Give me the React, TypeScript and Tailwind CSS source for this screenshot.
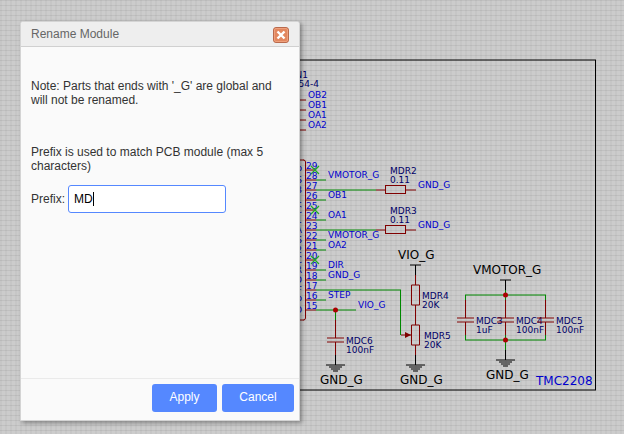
import { useState } from "react";

const GREEN = "#008800";
const MAROON = "#800000";
const BLUE = "#0000cc";
const NAVY = "#000066";

type LabelProps = {
  x: number;
  y: number;
  text: string;
  color?: string;
  size?: number;
  end?: boolean;
};

function Label({ x, y, text, color = BLUE, size = 9, end = false }: LabelProps) {
  return (
    <text x={x} y={y} fill={color} fontSize={size} textAnchor={end ? "end" : "start"}>
      {text}
    </text>
  );
}

type WireProps = { h?: string; v?: string; color?: string };

// Horizontal runs straddle two pixel rows and are drawn soft; vertical runs are crisp.
function Wire({ h, v, color = GREEN }: WireProps) {
  return (
    <g stroke={color} fill="none">
      {h && <path d={h} strokeWidth={2} strokeOpacity={0.5} />}
      {v && <path d={v} />}
    </g>
  );
}

function Ground({ x, y }: { x: number; y: number }) {
  return (
    <Wire
      color="#000"
      h={`M${x - 9.5} ${y}h19M${x - 6.5} ${y + 2}h13M${x - 4.5} ${y + 4}h9M${x - 2.5} ${y + 6}h5`}
    />
  );
}

function Box({ x, y, w, h }: { x: number; y: number; w: number; h: number }) {
  return (
    <Wire
      color={MAROON}
      h={`M${x} ${y}h${w}M${x} ${y + h}h${w}`}
      v={`M${x} ${y}v${h}M${x + w} ${y}v${h}`}
    />
  );
}

function Resistor({ y, name }: { y: number; name: string }) {
  return (
    <g>
      <Wire h={`M316 ${y}H376`} />
      <Wire color={MAROON} h={`M376 ${y}H385M406 ${y}H416`} />
      <rect x={385.5} y={y - 4.5} width={20} height={8} stroke={MAROON} fill="none" />
      <Label x={390} y={y - 16} text={name} color={NAVY} />
      <Label x={390} y={y - 7} text="0.11" color={NAVY} />
      <Label x={418} y={y - 2} text="GND_G" />
    </g>
  );
}

function Capacitor({ x, y, name, value }: { x: number; y: number; name: string; value: string }) {
  return (
    <g>
      <Wire
        color={MAROON}
        h={`M${x - 8.5} ${y - 2}h17M${x - 8.5} ${y + 2}h17`}
        v={`M${x} ${y - 20}V${y - 2}M${x} ${y + 2}V${y + 15}`}
      />
      <Label x={x + 10.5} y={y + 4} text={name} color={NAVY} />
      <Label x={x + 10.5} y={y + 13} text={value} color={NAVY} />
    </g>
  );
}

const pins = [
  { n: 29, name: "EP", nc: true },
  { n: 28, name: "VS", net: "VMOTOR_G" },
  { n: 27, name: "BRB" },
  { n: 26, name: "OB1", net: "OB1" },
  { n: 25, name: "NC", nc: true },
  { n: 24, name: "OA1", net: "OA1" },
  { n: 23, name: "BRA" },
  { n: 22, name: "VS", net: "VMOTOR_G" },
  { n: 21, name: "OA2", net: "OA2" },
  { n: 20, name: "NC", nc: true },
  { n: 19, name: "DIR", net: "DIR" },
  { n: 18, name: "GND", net: "GND_G" },
  { n: 17, name: "VREF" },
  { n: 16, name: "STEP", net: "STEP" },
  { n: 15, name: "VCC_IO" },
];

function Schematic() {
  return (
    <svg
      width="624"
      height="434"
      viewBox="0 0 624 434"
      className="block"
      fontFamily='"DejaVu Sans", sans-serif'
      aria-label="TMC2208 schematic"
    >
      <Wire color="#000" h="M200 60H596M200 390H596" v="M595.5 60V390" />

      <Label x={308} y={78} text="CN1" color={NAVY} end />
      <Label x={319} y={87} text="254-4" color={NAVY} end />
      {["OB2", "OB1", "OA1", "OA2"].map((net, i) => (
        <g key={net}>
          <Wire color={MAROON} h={`M290 ${100 + i * 10}H306`} />
          <Label x={308} y={98 + i * 10} text={net} />
        </g>
      ))}

      <Wire
        color={MAROON}
        h="M250 160H304M250 320H304"
        v="M303.5 160Q305.5 160 305.5 162V318Q305.5 320 303.5 320"
      />
      {pins.map((pin, i) => {
        const y = 170 + i * 10;
        return (
          <g key={pin.n}>
            <Wire color={MAROON} h={`M306 ${y}H316`} />
            <Label x={306} y={y - 1} text={String(pin.n)} />
            <Label x={302} y={y + 3} text={pin.name} end />
            {pin.nc && <path d={`M311 ${y - 4}l8 8m0 -8l-8 8`} stroke="#22aa22" strokeWidth={1.2} />}
            {pin.net && <Wire h={`M316 ${y}H326`} />}
            {pin.net && <Label x={328} y={y - 2} text={pin.net} />}
          </g>
        );
      })}

      <Resistor y={190} name="MDR2" />
      <Resistor y={230} name="MDR3" />

      <Label x={398} y={259} text="VIO_G" color="#000" size={12} />
      <Wire color="#000" h="M410 265H421" v="M415.5 265V275M415.5 355V365" />
      <Wire color={MAROON} v="M415.5 275V285M415.5 305V325M415.5 345V355" />
      <Box x={411.5} y={285} w={8} h={20} />
      <Box x={411.5} y={325} w={8} h={20} />
      <Label x={422} y={299} text="MDR4" color={NAVY} />
      <Label x={422} y={308} text="20K" color={NAVY} />
      <Label x={424} y={339} text="MDR5" color={NAVY} />
      <Label x={424} y={348} text="20K" color={NAVY} />
      <Ground x={415.5} y={365} />
      <Label x={400} y={384} text="GND_G" color="#000" size={12} />

      <Wire h="M316 290H401" v="M400.5 290V335" />
      <Wire color={MAROON} h="M401 335H411" />
      <path d="M405 332L411 335L405 338Z" fill={MAROON} />

      <Wire h="M316 310H356" v="M335.5 310V325" />
      <Label x={358} y={308} text="VIO_G" />
      <Capacitor x={335.5} y={340} name="MDC6" value="100nF" />
      <Wire color="#000" v="M335.5 355V365" />
      <circle cx={335.5} cy={310} r={2.5} fill="#aa0000" />
      <Ground x={335.5} y={365} />
      <Label x={320} y={384} text="GND_G" color="#000" size={12} />

      <Label x={473} y={274} text="VMOTOR_G" color="#000" size={12} />
      <Wire color="#000" h="M500 280H511" v="M505.5 280V290M505.5 350V360" />
      <Wire
        h="M465 295H546M465 340H546"
        v="M465.5 295V300M545.5 295V300M465.5 335V340M545.5 335V340M505.5 290V300M505.5 335V350"
      />
      <Capacitor x={465.5} y={320} name="MDC3" value="1uF" />
      <Capacitor x={505.5} y={320} name="MDC4" value="100nF" />
      <Capacitor x={545.5} y={320} name="MDC5" value="100nF" />
      <circle cx={505.5} cy={295} r={2.5} fill="#aa0000" />
      <circle cx={505.5} cy={340} r={2.5} fill="#aa0000" />
      <Ground x={505.5} y={360} />
      <Label x={486} y={379} text="GND_G" color="#000" size={12} />
      <Label x={536} y={385} text="TMC2208" size={12} />
    </svg>
  );
}

function RenameDialog() {
  const [prefix, setPrefix] = useState("MD");
  return (
    <section
      role="dialog"
      aria-labelledby="dialog-title"
      className="absolute top-[21px] left-5 flex h-[400px] w-[280px] flex-col rounded-t-[3px] border border-[#d4d4d4] bg-[#fafafa] text-xs leading-[14px] text-[#333] shadow-[2px_2px_4px_rgba(0,0,0,0.35)]"
    >
      <header className="flex h-[25px] items-center justify-between rounded-t-[2px] border-b border-[#d0d0d0] bg-[#eee] px-2.5">
        <h1 id="dialog-title" className="text-[#666]">
          Rename Module
        </h1>
        <button type="button" aria-label="Close" className="mt-0.5 block">
          <svg width="16" height="16" viewBox="0 0 16 16">
            <rect x="0.5" y="0.5" width="15" height="15" rx="2.5" fill="#e2875f" stroke="#b96a4d" />
            <rect x="1.5" y="1.5" width="13" height="13" rx="1.5" fill="none" stroke="#efa07c" />
            <path d="M4.5 4.5L11.5 11.5M11.5 4.5L4.5 11.5" stroke="#fff" strokeWidth="2.4" />
          </svg>
        </button>
      </header>
      <form className="flex flex-1 flex-col" onSubmit={(e) => e.preventDefault()}>
        <div className="flex-1 px-2.5 pt-8">
          <p>Note: Parts that ends with '_G' are global and will not be renamed.</p>
          <p className="mt-[38px]">Prefix is used to match PCB module (max 5 characters)</p>
          <div className="mt-3 flex items-center gap-[3px]">
            <label htmlFor="prefix">Prefix:</label>
            <div className="relative">
              <input
                id="prefix"
                type="text"
                maxLength={5}
                value={prefix}
                onChange={(e) => setPrefix(e.target.value)}
                className="block h-7 w-[158px] rounded-[3px] border border-[#5588ff] bg-white px-[5px] text-black caret-transparent outline-none"
              />
              <span className="absolute top-[7px] left-[25px] h-3.5 w-px bg-black" />
            </div>
          </div>
        </div>
        <footer className="flex h-[42px] items-start justify-end gap-[5px] border-t border-[#eaeaea] px-[5px] pt-[5px]">
          <button type="submit" className="h-7 w-[65px] rounded-[3px] bg-[#5588ff] pb-0.5 text-white">
            Apply
          </button>
          <button type="button" className="h-7 w-[72px] rounded-[3px] bg-[#5588ff] pb-0.5 text-white">
            Cancel
          </button>
        </footer>
      </form>
    </section>
  );
}

export default function App() {
  return (
    <main className="relative min-h-screen overflow-hidden bg-[#cccccc] bg-[linear-gradient(to_bottom,rgba(0,0,0,0.06)_1px,transparent_1px),linear-gradient(to_right,rgba(0,0,0,0.03)_2px,transparent_2px)] bg-[size:5px_5px] font-['Liberation_Sans',Arial,sans-serif]">
      <Schematic />
      <RenameDialog />
    </main>
  );
}
